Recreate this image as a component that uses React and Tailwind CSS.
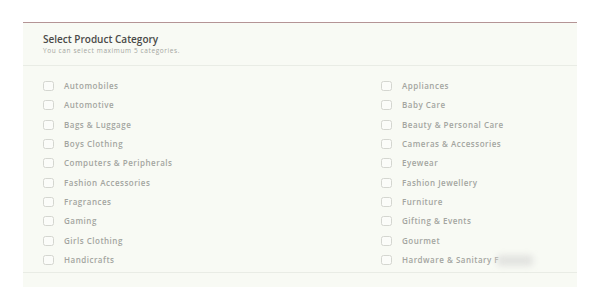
import React from "react";

const left = [
    "Automobiles",
    "Automotive",
    "Bags & Luggage",
    "Boys Clothing",
    "Computers & Peripherals",
    "Fashion Accessories",
    "Fragrances",
    "Gaming",
    "Girls Clothing",
    "Handicrafts",
];

const right = [
    "Appliances",
    "Baby Care",
    "Beauty & Personal Care",
    "Cameras & Accessories",
    "Eyewear",
    "Fashion Jewellery",
    "Furniture",
    "Gifting & Events",
    "Gourmet",
    "Hardware & Sanitary F",
];

const Row = ({ label, blur }) => (
    <label className="flex items-center h-[19.33px]">
        <span className="w-[11px] h-[10px] rounded-[2.5px] border border-[#d4d6d0] bg-[#fbfcf9] mr-[10px] shrink-0" />
        <span className="text-[8px] font-semibold tracking-[0.5px] text-[#a3a5a0] whitespace-nowrap">{label}</span>
        {blur && <span className="ml-[-2px] w-[36px] h-[11px] bg-[#e2e3e0] blur-[3px] rounded" />}
    </label>
);

export default function App() {
    const rows = left.map((l, i) => [l, right[i]]);
    return (
        <div className="w-[591px] h-[287px] bg-white overflow-hidden pt-[22px] pl-[23px] pr-[14px]" style={{ fontFamily: '"Open Sans", "DejaVu Sans", sans-serif' }}>
            <div className="h-[265px] bg-[#f8faf4] border-t-[1.5px] border-[#b49495]">
                <div className="h-[43px] border-b border-[#e9ece5] pl-[20px] pt-[10px]">
                    <h2 className="text-[10px] leading-[13px] font-semibold tracking-[0px] text-[#4a4a48]">Select Product Category</h2>
                    <p className="text-[6.5px] leading-[9px] tracking-[0.6px] text-[#a4a6a1]">You can select maximum 5 categories.</p>
                </div>
                <div className="pl-[20px] pt-[10.5px] pb-[2px] border-b border-[#e9ece5]">
                    {rows.map(([l, r], i) => (
                        <div key={i} className="grid grid-cols-[338px_1fr]">
                            <Row label={l} />
                            <Row label={r} blur={i === rows.length - 1} />
                        </div>
                    ))}
                </div>
            </div>
        </div>
    );
}
